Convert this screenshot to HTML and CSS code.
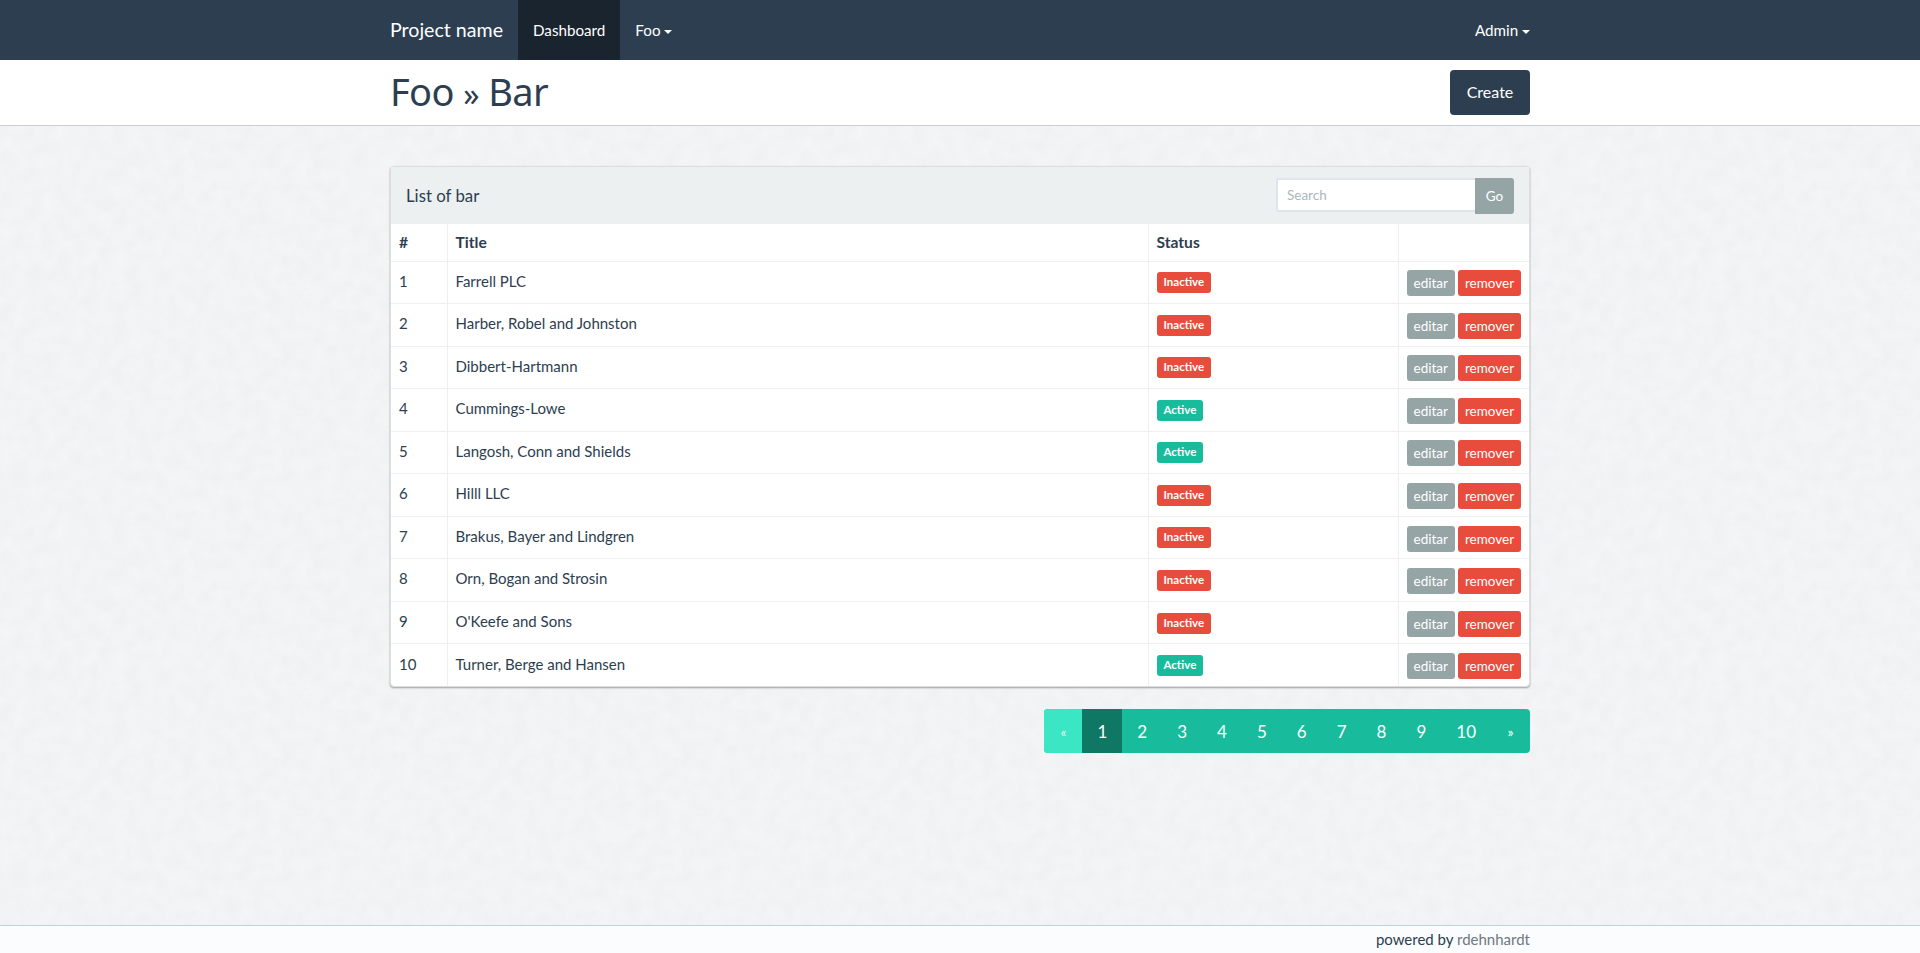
FILE: index.html
```html
<!DOCTYPE html>
<html lang="en">
<head>
    <meta charset="UTF-8">
    <meta name="viewport" content="width=device-width, initial-scale=1.0">
    <title>Foo » Bar</title>
    <link rel="stylesheet" href="styles.css">
</head>
<body>

    <!-- top navigation -->
    <nav class="navbar">
        <div class="container navbar-inner">
            <a class="brand" href="#">Project name</a>
            <a class="nav-link active" href="#">Dashboard</a>
            <a class="nav-link" href="#">Foo <span class="caret"></span></a>
            <a class="nav-link nav-right" href="#">Admin <span class="caret"></span></a>
        </div>
    </nav>

    <!-- page title -->
    <header class="page-header">
        <div class="container page-header-inner">
            <h1>Foo <span class="raquo">»</span> Bar</h1>
            <a class="btn btn-primary" href="#">Create</a>
        </div>
    </header>

    <main class="container content">
        <section class="panel">
            <div class="panel-heading">
                <h3>List of bar</h3>
                <form class="search">
                    <input type="text" placeholder="Search">
                    <button type="button" class="btn-go">Go</button>
                </form>
            </div>
            <table class="table">
                <thead>
                    <tr>
                        <th class="col-id">#</th>
                        <th class="col-title">Title</th>
                        <th class="col-status">Status</th>
                        <th class="col-actions"></th>
                    </tr>
                </thead>
                <tbody>
                    <tr>
                        <td>1</td>
                        <td>Farrell PLC</td>
                        <td><span class="label label-danger">Inactive</span></td>
                        <td class="actions"><a class="btn-xs btn-grey" href="#">editar</a><a class="btn-xs btn-red" href="#">remover</a></td>
                    </tr>
                    <tr>
                        <td>2</td>
                        <td>Harber, Robel and Johnston</td>
                        <td><span class="label label-danger">Inactive</span></td>
                        <td class="actions"><a class="btn-xs btn-grey" href="#">editar</a><a class="btn-xs btn-red" href="#">remover</a></td>
                    </tr>
                    <tr>
                        <td>3</td>
                        <td>Dibbert-Hartmann</td>
                        <td><span class="label label-danger">Inactive</span></td>
                        <td class="actions"><a class="btn-xs btn-grey" href="#">editar</a><a class="btn-xs btn-red" href="#">remover</a></td>
                    </tr>
                    <tr>
                        <td>4</td>
                        <td>Cummings-Lowe</td>
                        <td><span class="label label-success">Active</span></td>
                        <td class="actions"><a class="btn-xs btn-grey" href="#">editar</a><a class="btn-xs btn-red" href="#">remover</a></td>
                    </tr>
                    <tr>
                        <td>5</td>
                        <td>Langosh, Conn and Shields</td>
                        <td><span class="label label-success">Active</span></td>
                        <td class="actions"><a class="btn-xs btn-grey" href="#">editar</a><a class="btn-xs btn-red" href="#">remover</a></td>
                    </tr>
                    <tr>
                        <td>6</td>
                        <td>Hilll LLC</td>
                        <td><span class="label label-danger">Inactive</span></td>
                        <td class="actions"><a class="btn-xs btn-grey" href="#">editar</a><a class="btn-xs btn-red" href="#">remover</a></td>
                    </tr>
                    <tr>
                        <td>7</td>
                        <td>Brakus, Bayer and Lindgren</td>
                        <td><span class="label label-danger">Inactive</span></td>
                        <td class="actions"><a class="btn-xs btn-grey" href="#">editar</a><a class="btn-xs btn-red" href="#">remover</a></td>
                    </tr>
                    <tr>
                        <td>8</td>
                        <td>Orn, Bogan and Strosin</td>
                        <td><span class="label label-danger">Inactive</span></td>
                        <td class="actions"><a class="btn-xs btn-grey" href="#">editar</a><a class="btn-xs btn-red" href="#">remover</a></td>
                    </tr>
                    <tr>
                        <td>9</td>
                        <td>O'Keefe and Sons</td>
                        <td><span class="label label-danger">Inactive</span></td>
                        <td class="actions"><a class="btn-xs btn-grey" href="#">editar</a><a class="btn-xs btn-red" href="#">remover</a></td>
                    </tr>
                    <tr>
                        <td>10</td>
                        <td>Turner, Berge and Hansen</td>
                        <td><span class="label label-success">Active</span></td>
                        <td class="actions"><a class="btn-xs btn-grey" href="#">editar</a><a class="btn-xs btn-red" href="#">remover</a></td>
                    </tr>
                </tbody>
            </table>
        </section>

        <div class="pagination-row">
            <ul class="pagination">
                <li class="disabled"><span>«</span></li>
                <li class="current"><span>1</span></li>
                <li><a href="#">2</a></li>
                <li><a href="#">3</a></li>
                <li><a href="#">4</a></li>
                <li><a href="#">5</a></li>
                <li><a href="#">6</a></li>
                <li><a href="#">7</a></li>
                <li><a href="#">8</a></li>
                <li><a href="#">9</a></li>
                <li><a href="#">10</a></li>
                <li class="next"><a href="#">»</a></li>
            </ul>
        </div>
    </main>

    <footer class="footer">
        <div class="container footer-inner">powered by <a href="#">rdehnhardt</a></div>
    </footer>

</body>
</html>
```

FILE: styles.css
```css
* {
    box-sizing: border-box;
}

html, body {
    height: 100%;
}

body {
    margin: 0;
    display: flex;
    flex-direction: column;
    font-family: Lato, "Liberation Sans", sans-serif;
    font-size: 15px;
    line-height: 1.42857;
    color: #2c3e50;
    background-color: #eff1f3;
    background-image: url("data:image/svg+xml,%3Csvg xmlns='http://www.w3.org/2000/svg' width='400' height='400'%3E%3Cfilter id='n'%3E%3CfeTurbulence type='fractalNoise' baseFrequency='.07' numOctaves='3' stitchTiles='stitch'/%3E%3CfeColorMatrix values='0 0 0 0 1 0 0 0 0 1 0 0 0 0 1 .5 0 0 0 -.12'/%3E%3C/filter%3E%3Crect width='400' height='400' filter='url(%23n)'/%3E%3C/svg%3E");
}

a {
    color: inherit;
    text-decoration: none;
}

.container {
    width: 1170px;
    margin: 0 auto;
    padding: 0 15px;
}

/* navbar */
.navbar {
    background-color: #2c3e50;
    color: #fff;
    height: 60px;
}

.navbar-inner {
    display: flex;
    height: 60px;
}

.brand {
    font-size: 19.6px;
    line-height: 21px;
    padding: 19px 15px 20px 0;
}

.nav-link {
    padding: 0 15px;
    font-size: 15.2px;
    line-height: 61px;
}

.nav-link.active {
    background-color: #1a242f;
}

.nav-right {
    margin-left: auto;
    padding-right: 0;
}

.caret {
    display: inline-block;
    width: 0;
    height: 0;
    vertical-align: middle;
    border-top: 4px solid #fff;
    border-left: 4px solid transparent;
    border-right: 4px solid transparent;
}

/* page title */
.page-header {
    background-color: #fff;
    border-bottom: 1px solid #c6d0dc;
    height: 66px;
}

.page-header-inner {
    display: flex;
    justify-content: space-between;
    align-items: flex-start;
}

.page-header h1 {
    margin: 0;
    font-family: "Noto Sans", sans-serif;
    font-size: 38px;
    font-weight: 400;
    line-height: 63px;
    letter-spacing: -.6px;
}

.raquo {
    font-size: 32px;
}

.btn {
    display: inline-block;
    width: 80px;
    height: 45px;
    margin-top: 10px;
    padding: 0;
    font-size: 16px;
    line-height: 44px;
    text-align: center;
    border-radius: 4px;
    color: #fff;
}

.btn-primary {
    background-color: #2c3e50;
}

/* panel */
.content {
    flex: 1;
    padding-top: 40px;
}

.panel {
    background-color: #fff;
    border: 1px solid #ddd;
    border-radius: 4px;
    box-shadow: 0 1px 2px rgba(0, 0, 0, .35);
}

.panel-heading {
    display: flex;
    justify-content: space-between;
    align-items: center;
    height: 57px;
    padding: 0 15px;
    background-color: #ecf0f1;
}

.panel-heading h3 {
    margin: 0;
    font-size: 16.8px;
    font-weight: 400;
}

.search {
    display: flex;
    margin: 0;
}

.search input {
    width: 199px;
    height: 34px;
    padding: 6px 9px;
    font-family: inherit;
    font-size: 13.5px;
    color: #2c3e50;
    background-color: #fff;
    border: 2px solid #dce4ec;
    border-right: 0;
    border-radius: 3px 0 0 3px;
    outline: none;
}

.search input::placeholder {
    color: #acb6c0;
}

.btn-go {
    width: 39px;
    height: 36px;
    padding: 0;
    font-family: inherit;
    font-size: 13.5px;
    color: #fff;
    background-color: #95a5a6;
    border: none;
    border-radius: 0 3px 3px 0;
}

/* table */
.table {
    width: 100%;
    table-layout: fixed;
    border-collapse: collapse;
}

.table th, .table td {
    padding: 0 8px;
    text-align: left;
    vertical-align: middle;
    border-left: 1px solid #ecf0f1;
    border-top: 1px solid #ecf0f1;
}

.table th:first-child, .table td:first-child {
    border-left: none;
}

.table thead th {
    height: 37px;
    border-top: none;
    font-size: 15.6px;
    font-weight: 700;
}

.table tbody td {
    height: 42.55px;
    padding-bottom: 2px;
}

.col-id { width: 56px; }
.col-title { width: 701px; }
.col-status { width: 250px; }
.col-actions { width: 131px; }

.label {
    display: inline-block;
    padding: 0 7px;
    height: 21px;
    margin-top: 2px;
    line-height: 20px;
    font-size: 11.5px;
    font-weight: 700;
    color: #fff;
    border-radius: 3px;
    vertical-align: middle;
}

.label-danger { background-color: #e74c3c; }
.label-success { background-color: #18bc9c; }

.actions {
    white-space: nowrap;
}

.btn-xs {
    display: inline-block;
    height: 26px;
    padding: 0 7px;
    margin-top: 4px;
    font-size: 13.5px;
    line-height: 27px;
    color: #fff;
    border-radius: 3px;
    vertical-align: middle;
}

.btn-grey {
    background-color: #95a5a6;
    margin-right: 3px;
}

.btn-red { background-color: #e74c3c; }

/* pagination */
.pagination-row {
    display: flex;
    justify-content: flex-end;
    margin-top: 22px;
}

.pagination {
    display: flex;
    margin: 0;
    padding: 0;
    list-style: none;
    font-size: 17px;
    color: #fff;
    background-color: #18bc9c;
    border-radius: 4px;
    overflow: hidden;
}

.pagination li > * {
    display: block;
    height: 43.5px;
    padding: 11px 15px 0;
}

.pagination .disabled > * {
    width: 38px;
    padding: 13px 0 0;
    text-align: center;
    background-color: #3be6c4;
    color: #ecf0f1;
    font-size: 14px;
}

.pagination .current > * {
    background-color: #0f7864;
}

.pagination .next > * {
    width: 39px;
    padding: 13px 0 0;
    text-align: center;
    font-size: 14px;
}

/* footer */
.footer {
    height: 28px;
    background-color: #fbfcfd;
    border-top: 1px solid #c6d0dc;
}

.footer-inner {
    text-align: right;
    line-height: 27px;
}

.footer-inner a {
    color: #707880;
}
```
